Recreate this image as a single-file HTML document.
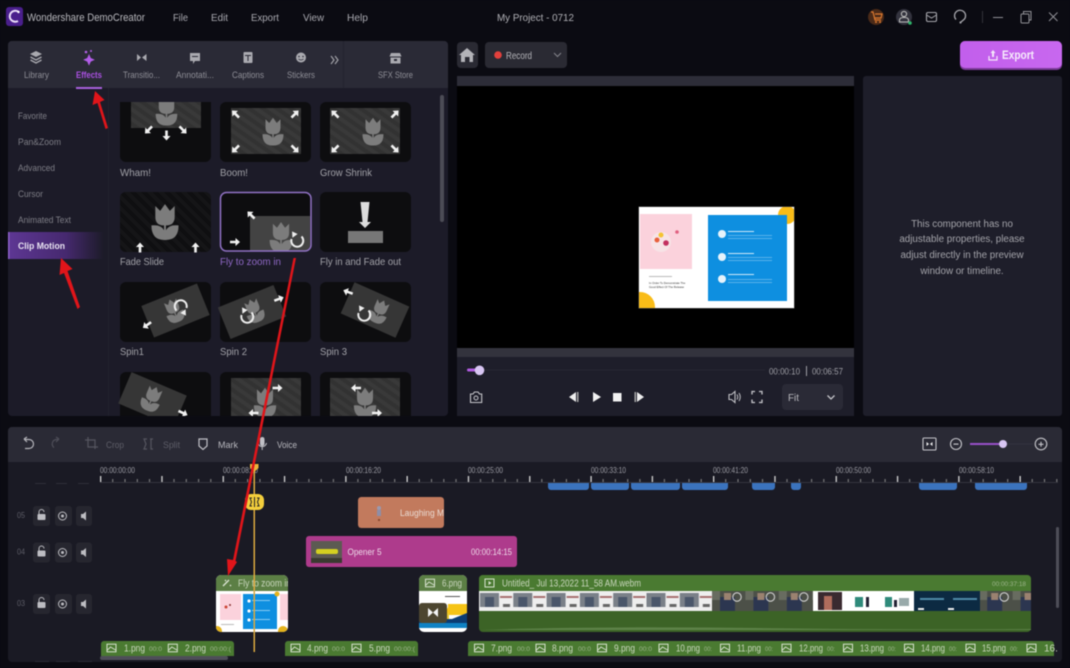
<!DOCTYPE html>
<html><head><meta charset="utf-8"><title>Wondershare DemoCreator</title>
<style>
html,body{margin:0;padding:0;background:#0b0b12;width:1070px;height:668px;overflow:hidden}
svg{display:block;filter:blur(.4px)}
text{font-family:"Liberation Sans",sans-serif;font-size:10px;fill:#a9a9b0}
.dim{fill:#5e5e68}
.t8{font-size:8px;fill:#9a9aa2}
.gt{font-size:10px;fill:#c9d6bd}
.gs{font-size:6.5px;fill:#9db58c}
</style></head><body>
<svg width="1070" height="668" viewBox="0 0 1070 668" xmlns="http://www.w3.org/2000/svg">
<defs>
<pattern id="hatch" width="8" height="8" patternUnits="userSpaceOnUse" patternTransform="rotate(-55)"><rect width="8" height="8" fill="#323232"/><rect width="4" height="8" fill="#393939"/></pattern>
<pattern id="hatch2" width="8" height="8" patternUnits="userSpaceOnUse" patternTransform="rotate(-45)"><rect width="8" height="8" fill="#0f0f11"/><rect width="4" height="8" fill="#151517"/></pattern>
<pattern id="mj" x="100" y="476" width="61.3" height="6" patternUnits="userSpaceOnUse"><rect x="0" y="0" width="1.3" height="6" fill="#d6d6d6"/><rect x="12.2" y="3" width="1" height="3" fill="#8a8a8a"/><rect x="24.5" y="3" width="1" height="3" fill="#8a8a8a"/><rect x="36.8" y="3" width="1" height="3" fill="#8a8a8a"/><rect x="49" y="3" width="1" height="3" fill="#8a8a8a"/></pattern>
<pattern id="fr" x="479" y="591" width="33.3" height="20" patternUnits="userSpaceOnUse"><rect width="33.3" height="20" fill="#eee"/><rect x="1" y="2" width="19" height="14" fill="#7a8088"/><rect x="6" y="6" width="9" height="10" fill="#4a566a"/><rect x="21" y="5" width="12" height="2" fill="#a87070"/><rect x="24" y="13" width="7" height="3" fill="#666"/></pattern>
<pattern id="ph" x="712" y="591" width="33.4" height="20" patternUnits="userSpaceOnUse"><rect width="33.4" height="20" fill="#4c5048"/><rect x="8" y="6" width="15" height="14" fill="#2c3650"/><rect x="12" y="2" width="7" height="7" fill="#9b8270"/><rect x="0" y="0" width="8" height="9" fill="#686c60"/><circle cx="25" cy="6" r="4.2" fill="none" stroke="#ddd" stroke-width="1"/></pattern>
<symbol id="tulip" viewBox="-16 -20 32 40" overflow="visible"><path d="M-10,-17 L-5,-12 L0,-19 L5,-12 L10,-17 V-6 Q10,3 1,3 V8 Q4,2 14,3 Q14,18 1,18 H-1 Q-14,18 -14,3 Q-4,2 -1,8 V3 Q-10,3 -10,-6Z" fill="#7c7c7c"/></symbol>
<g id="ar"><path d="M-5,-1.3 H.5 V-4 L5,0 L.5,4 V1.3 H-5Z" fill="#f1f1f1"/></g>
<g id="spin"><path d="M4.5,-3.5 A6,6 0 1 1 -5.5,-1" fill="none" stroke="#eee" stroke-width="2"/><path d="M-7,-7 L-1,-6 L-5,-1Z" fill="#eee" transform="rotate(15)"/></g>
<g id="imgi"><rect x="-4.5" y="-3.8" width="9" height="7.6" fill="none" stroke="#d8e2cf" stroke-width="1"/><path d="M-4,2 L-1,-1 L4,2" fill="none" stroke="#d8e2cf" stroke-width=".9"/></g>
<clipPath id="sl"><rect width="155" height="101"/></clipPath>
<g id="slide">
<rect width="155" height="101" fill="#fff"/>
<g clip-path="url(#sl)"><circle cx="148" cy="8" r="9" fill="#f9bc18"/><circle cx="1" cy="100" r="15" fill="#f9bc18"/></g>
<rect x="1" y="7" width="52" height="55" fill="#fbd2dc"/>
<circle cx="22" cy="35" r="10" fill="#f7e3e6"/><circle cx="18" cy="33" r="2.5" fill="#e8603c"/><circle cx="22" cy="28" r="2.5" fill="#f5c332"/><circle cx="27" cy="36" r="2.8" fill="#c23060"/><circle cx="38" cy="25" r="1.8" fill="#e06080"/>
<text x="10" y="77" style="font-size:2.8px;fill:#333">In Order To Demonstrate The</text>
<text x="10" y="81" style="font-size:2.8px;fill:#333">Good Effect Of The Release</text>
<rect x="10" y="69" width="23" height="1" fill="#bbb"/>
<rect x="69" y="8" width="79" height="86" fill="#0e8fe0"/>
<circle cx="83" cy="27" r="4" fill="#e6f3fb"/><circle cx="83" cy="50" r="4" fill="#e6f3fb"/><circle cx="83" cy="72" r="4" fill="#e6f3fb"/>
<g fill="#58b2ea"><rect x="89" y="24" width="26" height="1" fill="#cfe8f8"/><rect x="89" y="28" width="44" height="1"/><rect x="89" y="31" width="44" height="1"/><rect x="89" y="46" width="26" height="1" fill="#cfe8f8"/><rect x="89" y="50" width="44" height="1"/><rect x="89" y="53" width="44" height="1"/><rect x="89" y="67" width="26" height="1" fill="#cfe8f8"/><rect x="89" y="72" width="44" height="1"/><rect x="89" y="75" width="44" height="1"/></g>
</g>
<clipPath id="cp"><rect x="8" y="41" width="440" height="375"/></clipPath>
<clipPath id="cbot"><rect x="0" y="640" width="1070" height="16"/></clipPath>
<clipPath id="cfly"><rect x="216" y="575" width="72" height="57" rx="5"/></clipPath>
<clipPath id="csix"><rect x="419" y="575" width="48" height="57" rx="5"/></clipPath>
<clipPath id="cla"><rect x="358" y="497" width="86" height="31" rx="3"/></clipPath>
<clipPath id="c1"><rect x="120" y="102" width="91" height="60" rx="6"/></clipPath>
<clipPath id="c5"><rect x="221" y="193" width="89" height="58" rx="6"/></clipPath>
</defs>

<rect width="1070" height="668" fill="#0b0b12"/>

<!-- title bar -->
<rect x="6" y="7" width="17" height="19" rx="3" fill="#4a1f8c"/>
<path d="M18,11.5 A5.5,5.5 0 1 0 18,21" fill="none" stroke="#e9dcf8" stroke-width="2"/><circle cx="18.5" cy="12" r="1.2" fill="#fff"/>
<text x="27" y="21" textLength="118" style="font-size:11px;fill:#b8b8bd">Wondershare DemoCreator</text>
<text x="173" y="21" textLength="15" style="font-size:10.5px">File</text>
<text x="211" y="21" textLength="17" style="font-size:10.5px">Edit</text>
<text x="251" y="21" textLength="28" style="font-size:10.5px">Export</text>
<text x="303" y="21" textLength="21" style="font-size:10.5px">View</text>
<text x="347" y="21" textLength="21" style="font-size:10.5px">Help</text>
<text x="497" y="21" textLength="77" style="font-size:10.5px;fill:#b0b0b5">My Project - 0712</text>

<circle cx="876" cy="17" r="8" fill="#4a2a18"/>
<path d="M871,12 h2 l2,8 h6 M875,14 h7 l-1,4 h-6" fill="none" stroke="#dd7a30" stroke-width="1.2"/><circle cx="876" cy="22" r="1" fill="#dd7a30"/><circle cx="880" cy="22" r="1" fill="#dd7a30"/>
<circle cx="904" cy="17" r="8" fill="#33333e"/>
<circle cx="904" cy="14" r="2.6" fill="none" stroke="#bbb" stroke-width="1.1"/><path d="M899.5,22 v-2 q0,-2.5 4.500,-2.500 q4.500,0 4.500,2.500 v2z" fill="none" stroke="#bbb" stroke-width="1.1"/><circle cx="910" cy="23" r="1.8" fill="#2fb36a"/>
<rect x="926.5" y="12.5" width="10" height="9" rx="1.5" fill="none" stroke="#a5a5ab" stroke-width="1.1"/><path d="M926.5,15 L931.5,18 L936.5,15" fill="none" stroke="#a5a5ab" stroke-width="1"/>
<path d="M956,19.500 A5.500,5.500 0 1 1 964.500,19 L961,22" fill="none" stroke="#a5a5ab" stroke-width="1.300"/><circle cx="960.500" cy="22.500" r="1.100" fill="#a5a5ab"/>
<rect x="982" y="11" width="1" height="12" fill="#33333a"/>
<rect x="993" y="17" width="10" height="1" fill="#909096"/>
<rect x="1021" y="14" width="8" height="9" rx="1" fill="none" stroke="#909096"/><path d="M1023.5,14 V11.5 H1031 V20 H1029" fill="none" stroke="#909096"/>
<path d="M1049,12.5 L1057.5,21 M1057.5,12.5 L1049,21" stroke="#909096" stroke-width="1"/>

<!-- left panel -->
<rect x="8" y="41" width="440" height="375" rx="4" fill="#1c1b28"/>
<path d="M8,88 V45 a4,4 0 0 1 4,-4 H444 a4,4 0 0 1 4,4 V88Z" fill="#2a2a36"/>
<rect x="343" y="41" width="1" height="47" fill="#232330"/>
<rect x="108" y="88" width="1" height="328" fill="#22222e"/>

<!-- tab icons -->
<path d="M36,51 L42,54 L36,57 L30,54Z" fill="#aaaab0"/><path d="M30.5,57 L36,60 L41.5,57 M30.5,60 L36,63 L41.5,60" fill="none" stroke="#aaaab0" stroke-width="1.4"/>
<path d="M89,54 l1.8,4 4,1.8 -4,1.8 -1.8,4 -1.8,-4 -4,-1.8 4,-1.8z" fill="#b25de8"/><circle cx="86" cy="52" r="1.3" fill="#b25de8"/><circle cx="91" cy="51" r="1" fill="#b25de8"/>
<path d="M137,54 L141,57.5 L137,61Z M146.5,54 L142,57.5 L146.5,61Z" fill="#aaaab0"/>
<path d="M190,53 h10 v8 h-5 l-2,3 v-3 h-3z" fill="#aaaab0"/><rect x="192" y="56" width="6" height="1" fill="#2a2a36"/>
<rect x="243.5" y="52" width="9" height="11" rx="1" fill="#aaaab0"/><rect x="245" y="55" width="6" height="1" fill="#2a2a36"/><rect x="247.500" y="55" width="1" height="6" fill="#2a2a36"/>
<circle cx="301" cy="57.5" r="5" fill="#aaaab0"/><circle cx="299" cy="56.500" r=".8" fill="#2a2a36"/><circle cx="303" cy="56.500" r=".8" fill="#2a2a36"/><path d="M298.500,59 q2.500,2 5,0" fill="none" stroke="#2a2a36" stroke-width=".8"/>
<path d="M331,60 L334,64 L331,68 M335,60 L338,64 L335,68" transform="translate(0,-4)" fill="none" stroke="#a0a0a6" stroke-width="1.2"/>
<path d="M391,53 h9 l1.500,3.500 h-12z" fill="#aaaab0"/><rect x="390.500" y="57.500" width="10" height="6" fill="#aaaab0"/><rect x="394" y="59" width="3" height="2" fill="#2a2a36"/>

<text x="24" y="78" textLength="25" style="font-size:9.500px;fill:#8e8e96">Library</text>
<text x="76" y="78" textLength="26" style="font-size:9.500px;font-weight:bold;fill:#a950e0">Effects</text>
<text x="123" y="78" textLength="37" style="font-size:9.500px;fill:#8e8e96">Transitio...</text>
<text x="176" y="78" textLength="38" style="font-size:9.500px;fill:#8e8e96">Annotati...</text>
<text x="232" y="78" textLength="32" style="font-size:9.500px;fill:#8e8e96">Captions</text>
<text x="287" y="78" textLength="28" style="font-size:9.500px;fill:#8e8e96">Stickers</text>
<text x="378" y="78" textLength="35" style="font-size:9.500px;fill:#8e8e96">SFX Store</text>
<rect x="76" y="87" width="26" height="2" fill="#a860dc"/>

<!-- sidebar -->
<text x="18" y="119" textLength="29" style="font-size:9.500px;fill:#7e7e86">Favorite</text>
<text x="18" y="145" textLength="43" style="font-size:9.500px;fill:#7e7e86">Pan&amp;Zoom</text>
<text x="18" y="171" textLength="37" style="font-size:9.500px;fill:#7e7e86">Advanced</text>
<text x="18" y="197" textLength="25" style="font-size:9.500px;fill:#7e7e86">Cursor</text>
<text x="18" y="223" textLength="53" style="font-size:9.500px;fill:#7e7e86">Animated Text</text>
<linearGradient id="act"><stop offset="0" stop-color="#5e3794"/><stop offset=".6" stop-color="#46296f"/><stop offset="1" stop-color="#1c1b28"/></linearGradient>
<rect x="8" y="232" width="96" height="27" fill="url(#act)"/>
<rect x="8" y="232" width="1.500" height="27" fill="#8a60c8"/>
<text x="18" y="249" textLength="47" style="font-size:9.500px;font-weight:bold;fill:#e9e4f2">Clip Motion</text>

<!-- thumbs -->
<g clip-path="url(#cp)">
<g fill="#0d0d0f">
<path d="M120,102 H211 V156 a6,6 0 0 1 -6,6 H126 a6,6 0 0 1 -6,-6Z"/>
<rect x="220" y="102" width="91" height="60" rx="6"/>
<rect x="320" y="102" width="91" height="60" rx="6"/>
<rect x="120" y="192" width="91" height="60" rx="6"/>
<rect x="320" y="192" width="91" height="60" rx="6"/>
<rect x="120" y="282" width="91" height="60" rx="6"/>
<rect x="220" y="282" width="91" height="60" rx="6"/>
<rect x="320" y="282" width="91" height="60" rx="6"/>
<rect x="120" y="372" width="91" height="60" rx="6"/>
<rect x="220" y="372" width="91" height="60" rx="6"/>
<rect x="320" y="372" width="91" height="60" rx="6"/>
</g>

<!-- wham -->
<g clip-path="url(#c1)"><rect x="131" y="102" width="70" height="26" fill="url(#hatch)"/>
<use href="#tulip" x="154" y="96" width="25" height="31"/></g>
<use href="#ar" transform="translate(148.500,130) rotate(135)"/><use href="#ar" transform="translate(166.500,135.500) rotate(90)"/><use href="#ar" transform="translate(183,130) rotate(45)"/>

<!-- boom -->
<rect x="231" y="108" width="70" height="46" fill="url(#hatch)"/><use href="#tulip" x="261" y="117" width="24" height="30"/>
<use href="#ar" transform="translate(235.500,114) rotate(225)"/><use href="#ar" transform="translate(295,114) rotate(-45)"/><use href="#ar" transform="translate(235.500,149) rotate(135)"/><use href="#ar" transform="translate(295,149) rotate(45)"/>
<!-- grow -->
<rect x="330" y="108" width="70" height="46" fill="url(#hatch)"/><use href="#tulip" x="361" y="117" width="24" height="30"/>
<use href="#ar" transform="translate(335,114) rotate(225)"/><use href="#ar" transform="translate(395,114) rotate(-45)"/><use href="#ar" transform="translate(335,149) rotate(135)"/><use href="#ar" transform="translate(395,149) rotate(45)"/>
<text x="120" y="176" textLength="31" style="font-size:10.500px;fill:#a2a2a8">Wham!</text>
<text x="220" y="176" textLength="28" style="font-size:10.500px;fill:#a2a2a8">Boom!</text>
<text x="320" y="176" textLength="52" style="font-size:10.500px;fill:#a2a2a8">Grow Shrink</text>

<!-- fade slide -->
<rect x="120" y="192" width="91" height="60" rx="6" fill="url(#hatch2)"/>
<use href="#tulip" x="149.500" y="203" width="31" height="39"/>
<use href="#ar" transform="translate(140,247.500) rotate(-90)"/><use href="#ar" transform="translate(195.500,247.500) rotate(-90)"/>
<!-- fly -->
<rect x="220.500" y="192.500" width="90.500" height="58.500" rx="6" fill="#0d0d0f"/>
<g clip-path="url(#c5)"><rect x="250" y="216" width="62" height="36" fill="#434343"/><use href="#tulip" x="268" y="221" width="26" height="33"/></g>
<rect x="220.500" y="192.500" width="90.500" height="58.500" rx="6" fill="none" stroke="#9072c4" stroke-width="1.500"/>
<use href="#ar" transform="translate(251,215) rotate(225)"/><use href="#ar" transform="translate(235,242)"/>
<use href="#spin" transform="translate(297,240)"/>
<!-- fly in fade -->
<rect x="348" y="231" width="35" height="12" fill="#777"/>
<path d="M360.500,202 H369.500 L367.500,222 H371 L365,228 L359,222 H362.500Z" fill="#dcdcdc"/>
<text x="120" y="265" textLength="44" style="font-size:10.500px;fill:#a2a2a8">Fade Slide</text>
<text x="220" y="265" textLength="61" style="font-size:10.500px;fill:#8f68c6">Fly to zoom in</text>
<text x="320" y="265" textLength="81" style="font-size:10.500px;fill:#a2a2a8">Fly in and Fade out</text>

<!-- spins -->
<g transform="translate(175.500,310.500) rotate(-22)"><rect x="-30" y="-17" width="60" height="34" fill="#363636"/><use href="#tulip" x="-12" y="-13" width="21" height="26"/></g>
<use href="#spin" transform="translate(181,307) rotate(180)"/><use href="#ar" transform="translate(147,325) rotate(145)"/>
<g transform="translate(252,312) rotate(-22)"><rect x="-30" y="-17" width="60" height="34" fill="#363636"/><use href="#tulip" x="-8" y="-13" width="21" height="26"/></g>
<use href="#spin" transform="translate(247,316)"/><use href="#ar" transform="translate(279,299) rotate(-20)"/>
<g transform="translate(375,310) rotate(24)"><rect x="-30" y="-17" width="60" height="34" fill="#363636"/><use href="#tulip" x="-6" y="-13" width="21" height="26"/></g>
<use href="#spin" transform="translate(364,314)"/><use href="#ar" transform="translate(348,292) rotate(200)"/>
<text x="120" y="355" textLength="24" style="font-size:10.500px;fill:#a2a2a8">Spin1</text>
<text x="220" y="355" textLength="27" style="font-size:10.500px;fill:#a2a2a8">Spin 2</text>
<text x="320" y="355" textLength="27" style="font-size:10.500px;fill:#a2a2a8">Spin 3</text>

<!-- row 4 -->
<g transform="translate(152.500,399.500) rotate(23)"><rect x="-30" y="-17" width="60" height="34" fill="#363636"/><use href="#tulip" x="-12" y="-14" width="22" height="28"/></g>
<use href="#ar" transform="translate(183,413) rotate(25)"/>
<rect x="231" y="378" width="70" height="44" fill="url(#hatch)"/><use href="#tulip" x="252" y="387" width="26" height="32"/>
<use href="#ar" transform="translate(277.500,388)"/><use href="#ar" transform="translate(253.500,413) rotate(180)"/>
<rect x="330" y="378" width="70" height="44" fill="url(#hatch)"/><use href="#tulip" x="352" y="387" width="26" height="32"/>
<use href="#ar" transform="translate(356,388) rotate(180)"/><use href="#ar" transform="translate(377,413)"/>
</g>
<rect x="440" y="95" width="4" height="127" rx="2" fill="#4c4c56"/>

<!-- top-right controls -->
<rect x="457" y="42" width="21" height="26" rx="4" fill="#2a2a33"/>
<path d="M467,48 L475,55 H473 V62 H469.500 V57 H465 V62 H461 V55 H459Z" fill="#b3b3b8"/>
<rect x="485" y="42" width="82" height="26" rx="4" fill="#2a2a33"/>
<circle cx="498" cy="55" r="3.800" fill="#e2403c"/>
<text x="506" y="59" textLength="26" style="font-size:10px;fill:#b5b5ba">Record</text>
<path d="M554,53 L557.500,56.500 L561,53" fill="none" stroke="#85858c" stroke-width="1"/>
<linearGradient id="ex" x1="0" x2="1"><stop offset="0" stop-color="#c25fec"/><stop offset="1" stop-color="#c868ef"/></linearGradient>
<rect x="960" y="41" width="102" height="29" rx="5" fill="#7b3a98"/>
<rect x="960" y="41" width="102" height="27" rx="5" fill="url(#ex)"/>
<path d="M993,50 L995.500,53 H994 V57 H992 V53 H990.500Z" fill="#f5e8fb"/><path d="M989,56 V60 H997 V56" fill="none" stroke="#f5e8fb" stroke-width="1.200"/>
<text x="1002" y="59" textLength="32" style="font-size:11.500px;font-weight:bold;fill:#f7ecfc">Export</text>

<!-- preview -->
<rect x="457" y="76" width="397" height="10" fill="#2d2d38"/>
<rect x="457" y="86" width="397" height="262" fill="#000"/>
<rect x="457" y="348" width="397" height="9" fill="#33333d"/>
<rect x="457" y="357" width="397" height="59" fill="#1e1e2a"/>
<rect x="638.500" y="206.500" width="156" height="102" fill="#555"/>
<use href="#slide" x="639" y="207"/>
<rect x="480" y="369.500" width="285" height="1" fill="#262632"/>
<rect x="467" y="368.500" width="10" height="3" rx="1.500" fill="#b05be0"/>
<circle cx="479.500" cy="370.300" r="4.800" fill="#d8c6f3"/>
<text x="769" y="374.500" textLength="31" style="font-size:9.500px;fill:#9e9ea5">00:00:10</text>
<rect x="806" y="366" width="1" height="10" fill="#9e9ea5"/>
<text x="812" y="374.500" textLength="31" style="font-size:9.500px;fill:#9e9ea5">00:06:57</text>
<path d="M470.500,394 h2.500 l1.500,-2 h3.500 l1.500,2 h2.200 v8.500 h-11.200z" fill="none" stroke="#c5c5ca" stroke-width="1.100"/><circle cx="476" cy="398" r="2" fill="none" stroke="#c5c5ca"/>
<path d="M576,392 V402 L569,397Z" fill="#eee"/><rect x="577" y="392" width="1.500" height="10" fill="#aaa"/>
<path d="M593,392 L601,397 L593,402Z" fill="#f2f2f2"/>
<rect x="613" y="393" width="8.500" height="8.500" fill="#f2f2f2"/>
<rect x="634.500" y="392" width="1.500" height="10" fill="#aaa"/><path d="M637,392 L644,397 L637,402Z" fill="#eee"/>
<path d="M729,394.500 h2.500 l3.500,-3 v11 l-3.500,-3 h-2.500z" fill="none" stroke="#c0c0c5" stroke-width="1.100"/><path d="M737,394.500 q1.500,2.500 0,5 M739,393 q2.500,4 0,8" fill="none" stroke="#c0c0c5" stroke-width="1"/>
<path d="M752,394.500 v-3 h3 M759,391.500 h3 v3 M762,399.500 v3 h-3 M755,402.500 h-3 v-3" fill="none" stroke="#c5c5ca" stroke-width="1.300"/>
<rect x="782" y="384" width="61" height="26" rx="4" fill="#2a2a36"/>
<text x="788" y="401" textLength="11" style="font-size:10.500px;fill:#b8b8bd">Fit</text>
<path d="M827.500,395.500 L831,399 L834.500,395.500" fill="none" stroke="#c5c5ca" stroke-width="1.300"/>

<!-- right panel -->
<rect x="863" y="76" width="199" height="340" rx="3" fill="#1e1e2a"/>
<text x="962" y="227" style="font-size:9.800px;fill:#a4a4aa" text-anchor="middle">This component has no</text>
<text x="962" y="242" style="font-size:9.800px;fill:#a4a4aa" text-anchor="middle">adjustable properties, please</text>
<text x="962" y="258" style="font-size:9.800px;fill:#a4a4aa" text-anchor="middle">adjust directly in the preview</text>
<text x="962" y="274" style="font-size:9.800px;fill:#a4a4aa" text-anchor="middle">window or timeline.</text>

<!-- timeline -->
<rect x="8" y="427" width="1054" height="235" rx="4" fill="#1a1a24"/>
<path d="M8,462 V431 a4,4 0 0 1 4,-4 H1058 a4,4 0 0 1 4,4 V462Z" fill="#2a2a35"/>

<path d="M24,439 L27,437 M24,439 L27,442 M24,439.500 h5 a4.500,4.500 0 0 1 0,9 h-4" fill="none" stroke="#b5b5bb" stroke-width="1.200"/>
<path d="M59,439 L56,437 M59,439 L56,442 M59,439.500 h-3 a4.500,4.500 0 0 0 -2,8" fill="none" stroke="#4e4e58" stroke-width="1.200"/>
<path d="M85,440 h10 v9 M88,437 v10 h10" fill="none" stroke="#55555f" stroke-width="1.200"/>
<text x="106" y="448" textLength="18" class="dim" style="font-size:9.500px">Crop</text>
<path d="M147,439 h-3 l2,5 l-2,5 h3 M150,439 h3 l-2,0 v10 h2" fill="none" stroke="#55555f" stroke-width="1.200"/>
<text x="163" y="448" textLength="17" class="dim" style="font-size:9.500px">Split</text>
<path d="M199,439 h8 v7 l-4,3.500 l-4,-3.500z" fill="none" stroke="#c0c0c6" stroke-width="1.200"/>
<text x="218" y="448" textLength="20" style="font-size:9.500px;fill:#b8b8be">Mark</text>
<rect x="260" y="437" width="4.500" height="9" rx="2.200" fill="#c0c0c6"/><path d="M258,443 a4.300,4.300 0 0 0 8.500,0 M262.200,447 v3" fill="none" stroke="#c0c0c6"/>
<text x="277" y="448" textLength="20" style="font-size:9.500px;fill:#b8b8be">Voice</text>

<rect x="923" y="438" width="13" height="12" rx="1" fill="none" stroke="#c5c5ca" stroke-width="1.100"/><path d="M929,444 l-2.500,-2 v4z M930,444 l2.500,-2 v4z" fill="#eee"/>
<circle cx="956" cy="444" r="5.500" fill="none" stroke="#c5c5ca" stroke-width="1.100"/><rect x="953.500" y="443.500" width="5" height="1.200" fill="#c5c5ca"/>
<rect x="970" y="443" width="33" height="2" fill="#9850c8"/>
<rect x="1003" y="443.500" width="30" height="1" fill="#333340"/>
<circle cx="1003" cy="444" r="4" fill="#d8c6f3"/>
<circle cx="1041" cy="444" r="5.800" fill="none" stroke="#c5c5ca" stroke-width="1.100"/><path d="M1038.500,444.300 h5 M1041,441.800 v5" stroke="#c5c5ca" stroke-width="1.100"/>

<!-- ruler -->
<text x="100" y="473" textLength="35" class="t8">00:00:00:00</text>
<text x="223" y="473" textLength="35" class="t8">00:00:08:10</text>
<text x="346" y="473" textLength="35" class="t8">00:00:16:20</text>
<text x="468" y="473" textLength="35" class="t8">00:00:25:00</text>
<text x="591" y="473" textLength="35" class="t8">00:00:33:10</text>
<text x="713" y="473" textLength="35" class="t8">00:00:41:20</text>
<text x="836" y="473" textLength="35" class="t8">00:00:50:00</text>
<text x="959" y="473" textLength="35" class="t8">00:00:58:10</text>
<rect x="100" y="476" width="958" height="6" fill="url(#mj)"/>
<rect x="100" y="482" width="958" height="1" fill="#33333d"/>
<rect x="35" y="483" width="11" height="1" fill="#2e2e38"/><rect x="56" y="483" width="11" height="1" fill="#2e2e38"/><rect x="78" y="483" width="11" height="1" fill="#2e2e38"/>

<g fill="#3b73bd">
<path d="M548,483 H589 V487 a3,3 0 0 1 -3,3 H551 a3,3 0 0 1 -3,-3Z"/>
<path d="M591,483 H629 V487 a3,3 0 0 1 -3,3 H594 a3,3 0 0 1 -3,-3Z"/>
<path d="M631,483 H680 V487 a3,3 0 0 1 -3,3 H634 a3,3 0 0 1 -3,-3Z"/>
<path d="M682,483 H728 V487 a3,3 0 0 1 -3,3 H685 a3,3 0 0 1 -3,-3Z"/>
<path d="M752,483 H775 V487 a3,3 0 0 1 -3,3 H755 a3,3 0 0 1 -3,-3Z"/>
<path d="M791,483 H801 V487 a3,3 0 0 1 -3,3 H794 a3,3 0 0 1 -3,-3Z"/>
<path d="M919,483 H957 V487 a3,3 0 0 1 -3,3 H922 a3,3 0 0 1 -3,-3Z"/>
<path d="M975,483 H1027 V487 a3,3 0 0 1 -3,3 H978 a3,3 0 0 1 -3,-3Z"/>
</g>

<!-- track headers -->
<text x="17" y="518" textLength="8" class="t8" style="fill:#5c5c66">05</text>
<text x="17" y="554.500" textLength="8" class="t8" style="fill:#5c5c66">04</text>
<text x="17" y="606" textLength="8" class="t8" style="fill:#5c5c66">03</text>
<g id="h05">
<rect x="33" y="506" width="17" height="20" rx="3" fill="#26262f"/><rect x="55" y="506" width="17" height="20" rx="3" fill="#26262f"/><rect x="76" y="506" width="16" height="20" rx="3" fill="#26262f"/>
<rect x="37.500" y="514" width="8" height="6" rx="1" fill="#bdbdc2"/><path d="M39,514 v-2 a2.500,2.500 0 0 1 5,0" fill="none" stroke="#bdbdc2" stroke-width="1"/>
<circle cx="62.500" cy="516" r="4" fill="none" stroke="#bdbdc2"/><circle cx="62.500" cy="516" r="1.500" fill="#bdbdc2"/>
<path d="M81,514 h2 l3,-2.500 v9 l-3,-2.500 h-2z" fill="#bdbdc2"/>
</g>
<use href="#h05" y="36.500"/>
<use href="#h05" y="88"/>

<!-- tracks -->
<g clip-path="url(#cla)"><rect x="358" y="497" width="86" height="31" rx="3" fill="#c27a5d"/>
<circle cx="379" cy="508" r="2" fill="#9a9ab0"/><rect x="377" y="510" width="4" height="6" fill="#8e8ea8"/><rect x="378" y="519" width="2" height="2" fill="#8a4a30"/>
<text x="400" y="516" textLength="44" style="font-size:9.500px;fill:#eadbd3">Laughing M</text></g>

<rect x="306" y="536" width="211" height="31" rx="3" fill="#ae3b8c"/>
<rect x="311" y="541" width="31" height="22" fill="#5c5a52"/><rect x="316" y="549" width="22" height="5" rx="2" fill="#d4d020"/><rect x="311" y="558" width="31" height="5" fill="#3a3a30"/>
<text x="347.500" y="555" textLength="34" style="font-size:9.500px;fill:#edd9e8">Opener 5</text>
<text x="471" y="555" textLength="41" style="font-size:9.500px;fill:#edd9e8">00:00:14:15</text>

<!-- fly clip -->
<g clip-path="url(#cfly)">
<rect x="216" y="575" width="72" height="57" fill="#fff"/>
<rect x="216" y="575" width="72" height="16" fill="#5c7f45"/>
<rect x="220" y="594" width="21" height="26" fill="#fbd2dc"/><circle cx="226" cy="607" r="1.500" fill="#c43"/><circle cx="230" cy="605" r="1" fill="#833"/>
<rect x="243" y="594" width="34" height="35" fill="#0e8fe0"/>
<circle cx="249" cy="601" r="1.600" fill="#fff"/><circle cx="249" cy="611" r="1.600" fill="#fff"/><circle cx="249" cy="620" r="1.600" fill="#fff"/>
<rect x="252" y="600" width="18" height="1" fill="#8ccbf2"/><rect x="252" y="610" width="18" height="1" fill="#8ccbf2"/><rect x="252" y="619" width="18" height="1" fill="#8ccbf2"/>
<rect x="280" y="594" width="8" height="26" fill="#fbd2dc"/>
<circle cx="217" cy="631" r="5" fill="#e4b31c"/><circle cx="283" cy="631" r="5" fill="#e4b31c"/><circle cx="277" cy="594" r="2.500" fill="#e4b31c"/>
<rect x="221" y="624" width="13" height="1" fill="#bbb"/>
<text x="238" y="586.500" textLength="53" class="gt">Fly to zoom in</text>
</g>
<path d="M223,586 L229,580 M230,585 l1,1 M225,580 l1,1" stroke="#dbe4d3" stroke-width="1.400" fill="none"/>

<!-- 6.png -->
<g clip-path="url(#csix)">
<rect x="419" y="575" width="48" height="57" fill="#fff"/>
<rect x="419" y="575" width="48" height="16" fill="#5c7f45"/>
<path d="M419,613 h26 l3,-6 v-3 h19 v11 h-24 l-4,3 h-20z" fill="#f6c416"/>
<rect x="419" y="613" width="30" height="6" fill="#e8c830"/>
<path d="M419,619 L452,619 L467,613 V623 H419Z" fill="#0c3c72"/>
<rect x="419" y="623" width="48" height="5" fill="#0f82c4"/>
<rect x="445" y="596" width="15" height="1" fill="#555"/>
<rect x="419" y="603" width="28" height="20" rx="3" fill="#4d4630"/>
<path d="M428,608 L433,612.500 L428,617Z M438,608 L433,612.500 L438,617Z" fill="#f4f4f4"/>
</g>
<use href="#imgi" transform="translate(430,583)"/>
<text x="442" y="586.500" textLength="20" class="gt">6.png</text>

<!-- webm -->
<rect x="479" y="575" width="552" height="57" rx="4" fill="#3c6326"/>
<path d="M479,591 V579 a4,4 0 0 1 4,-4 H1027 a4,4 0 0 1 4,4 V591Z" fill="#4a7a31"/>
<rect x="485" y="579" width="9" height="8" fill="none" stroke="#d8e2cf"/><path d="M488.500,581 l3,2 l-3,2z" fill="#d8e2cf"/>
<text x="502" y="586.500" textLength="139" class="gt">Untitled_ Jul 13,2022 11_58 AM.webm</text>
<text x="992" y="586" textLength="34" class="gs">00:00:37:18</text>
<rect x="479" y="591" width="233" height="20" fill="url(#fr)"/>
<rect x="712" y="591" width="101" height="20" fill="url(#ph)"/>
<rect x="813" y="591" width="101" height="20" fill="#fff"/>
<rect x="818" y="592" width="24" height="18" fill="#3a2a30"/><rect x="824" y="596" width="8" height="14" fill="#b06c5c"/>
<rect x="855" y="597" width="8" height="10" fill="#2f8a7a"/><rect x="866" y="597" width="3" height="10" fill="#223"/>
<rect x="885" y="597" width="7" height="10" fill="#2f8a7a"/><rect x="894" y="600" width="3" height="7" fill="#223"/><rect x="899" y="598" width="10" height="8" fill="#9aa"/>
<rect x="914" y="591" width="67" height="20" fill="#0c2a42"/><rect x="920" y="598" width="24" height="2" fill="#4e8aa8"/><rect x="953" y="598" width="24" height="2" fill="#4e8aa8"/><rect x="918" y="608" width="6" height="2" fill="#eee"/><rect x="948" y="608" width="6" height="2" fill="#eee"/>
<rect x="980" y="591" width="51" height="20" fill="url(#ph)"/>
<path d="M479,630 q120,-4 276,-2 t276,1 v1 h-552z" fill="#5d8248"/>

<!-- bottom row -->
<g clip-path="url(#cbot)">
<rect x="101" y="641" width="133" height="20" rx="3" fill="#4a7a31"/>
<rect x="285" y="641" width="133" height="20" rx="3" fill="#4a7a31"/>
<rect x="468" y="641" width="586" height="20" rx="3" fill="#4a7a31"/>
<use href="#imgi" transform="translate(111.500,648)"/><text x="124" y="651.500" textLength="21" class="gt">1.png</text><text x="149" y="651" textLength="13" class="gs">00:0</text>
<use href="#imgi" transform="translate(172.800,648)"/><text x="185" y="651.500" textLength="21" class="gt">2.png</text><text x="210" y="651" textLength="21" class="gs">00:00:(</text>
<use href="#imgi" transform="translate(295.500,648)"/><text x="307" y="651.500" textLength="21" class="gt">4.png</text><text x="332" y="651" textLength="13" class="gs">00:0</text>
<use href="#imgi" transform="translate(356.500,648)"/><text x="369" y="651.500" textLength="21" class="gt">5.png</text><text x="394" y="651" textLength="21" class="gs">00:00:(</text>
<use href="#imgi" transform="translate(479,648)"/><text x="491" y="651.500" textLength="21" class="gt">7.png</text><text x="517" y="651" textLength="13" class="gs">00:0</text>
<use href="#imgi" transform="translate(540.500,648)"/><text x="552" y="651.500" textLength="21" class="gt">8.png</text><text x="578" y="651" textLength="13" class="gs">00:0</text>
<use href="#imgi" transform="translate(602,648)"/><text x="614" y="651.500" textLength="21" class="gt">9.png</text><text x="639" y="651" textLength="13" class="gs">00:0</text>
<use href="#imgi" transform="translate(663.500,648)"/><text x="676" y="651.500" textLength="24" class="gt">10.png</text><text x="704" y="651" textLength="8" class="gs">00:</text>
<use href="#imgi" transform="translate(725,648)"/><text x="737" y="651.500" textLength="24" class="gt">11.png</text><text x="765" y="651" textLength="8" class="gs">00:</text>
<use href="#imgi" transform="translate(786.500,648)"/><text x="799" y="651.500" textLength="24" class="gt">12.png</text><text x="827" y="651" textLength="8" class="gs">00:</text>
<use href="#imgi" transform="translate(848,648)"/><text x="860" y="651.500" textLength="24" class="gt">13.png</text><text x="888" y="651" textLength="8" class="gs">00:</text>
<use href="#imgi" transform="translate(909,648)"/><text x="921" y="651.500" textLength="24" class="gt">14.png</text><text x="949" y="651" textLength="8" class="gs">00:</text>
<use href="#imgi" transform="translate(970.500,648)"/><text x="982" y="651.500" textLength="24" class="gt">15.png</text><text x="1010" y="651" textLength="8" class="gs">00:</text>
<use href="#imgi" transform="translate(1031.500,648)"/><text x="1044" y="651.500" class="gt">16.</text>
</g>
<rect x="100" y="656" width="128" height="4" rx="2" fill="#4e4e58"/>
<rect x="1056" y="527" width="3" height="81" rx="1.500" fill="#4e4e58"/>
<rect x="35" y="661" width="14" height="1" fill="#2a2a34"/><rect x="56" y="661" width="14" height="1" fill="#2a2a34"/><rect x="78" y="661" width="14" height="1" fill="#2a2a34"/>

<!-- playhead -->
<rect x="253.500" y="468" width="1.500" height="184" fill="#dba93e"/>
<path d="M250,464 H258.500 V468 L254.200,472 L250,468Z" fill="#eeb43a"/>
<rect x="245" y="494" width="19" height="16" rx="6" fill="#f3ce3c"/>
<path d="M252,498 h-2 l1.500,4 l-1.500,4 h2 M257,498 h2 l-1.500,4 l1.500,4 h-2" fill="none" stroke="#222" stroke-width="1"/><rect x="254" y="497" width="1" height="10" fill="#222"/>

<!-- red arrows -->
<g fill="#e0151a">
<path d="M108,128 L105.500,129 L97.500,103 L92.500,105 L95,91 L104.500,100 L100,102Z"/>
<path d="M80,307 L77.500,309 L64,273 L59.500,275 L61,258 L72.500,269 L67.500,271Z"/>
<path d="M296,258 L293.500,258 L233,560 L227,559 L228,576 L237,562 L235.500,561Z"/>
</g>
</svg>
<script>document.querySelectorAll('text[textLength]').forEach(function(t){t.setAttribute('lengthAdjust','spacingAndGlyphs')});</script>
</body></html>
